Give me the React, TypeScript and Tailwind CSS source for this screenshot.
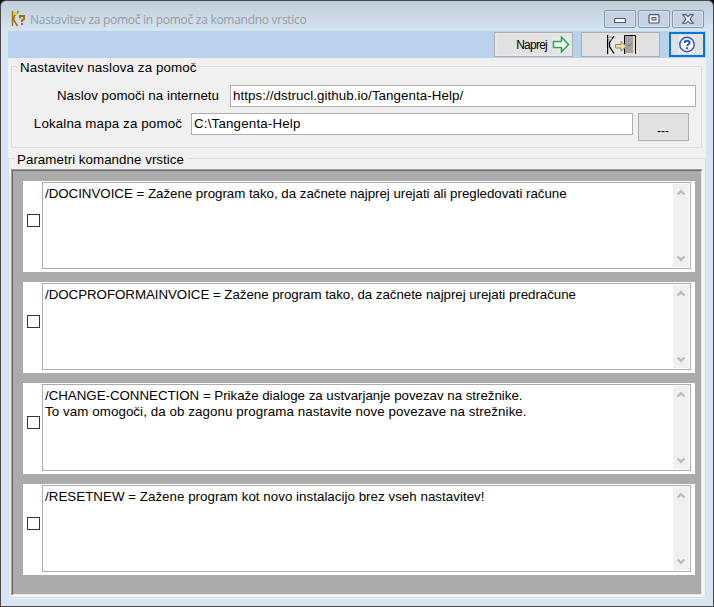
import React from "react";

type Param = { lines: { text: string; cls: string }[] };

const params: Param[] = [
  { lines: [{ text: "/DOCINVOICE = Zažene program tako, da začnete najprej urejati ali pregledovati račune", cls: "tracking-[-0.03px]" }] },
  { lines: [{ text: "/DOCPROFORMAINVOICE = Zažene program tako, da začnete najprej urejati predračune", cls: "tracking-[-0.045px]" }] },
  {
    lines: [
      { text: "/CHANGE-CONNECTION = Prikaže dialoge za ustvarjanje povezav na strežnike.", cls: "tracking-[-0.03px]" },
      { text: "To vam omogoči, da ob zagonu programa nastavite nove povezave na strežnike.", cls: "tracking-[0.08px]" },
    ],
  },
  { lines: [{ text: "/RESETNEW = Zažene program kot novo instalacijo brez vseh nastavitev!", cls: "tracking-[0.03px]" }] },
];

function AppIcon() {
  return (
    <svg width="16" height="17" viewBox="0 0 16 17" fill="none">
      <path d="M1.500 1v15M7.500 1L3 6.500v4L6.500 16" stroke="#a86a08" strokeWidth="1.400" />
      <rect x="3" y="2" width="3" height="3" fill="#b8e04a" />
      <path d="M9 8.500V6h4v3l-2 1.500V12M11 13v2" stroke="#a86a08" strokeWidth="2" />
    </svg>
  );
}

function CaptionButton({ children }: { children: React.ReactNode }) {
  return (
    <div className="flex h-[18px] w-8 items-center justify-center rounded-[2px] border border-[#8896a8] bg-[#c3d3e4] shadow-[inset_0_0_0_1px_#d5e1ed]">
      {children}
    </div>
  );
}

function TitleBar() {
  return (
    <div className="flex h-[30px] items-start pl-2.5 pr-[9px]">
      <div className="mt-[9px]"><AppIcon /></div>
      <div className="ml-[3px] mt-[10px] whitespace-nowrap font-['Open_Sans',sans-serif] text-[12px] leading-[18px] tracking-[-0.28px] text-[#969ba1]">
        Nastavitev za pomoč in pomoč za komandno vrstico
      </div>
      <div className="ml-auto mt-[9px] flex gap-0.5">
        <CaptionButton>
          <svg width="12" height="6" viewBox="0 0 12 6" className="mt-1">
            <rect x="0.500" y="0.500" width="11" height="4" rx="1" fill="#f4f6f8" stroke="#535666" strokeWidth="1.200" />
          </svg>
        </CaptionButton>
        <CaptionButton>
          <svg width="12" height="10" viewBox="0 0 12 10">
            <rect x="1" y="0.700" width="10" height="8.300" rx="1" fill="#f4f6f8" stroke="#535666" strokeWidth="1.200" />
            <rect x="4" y="3.500" width="4" height="2.500" fill="#c3d3e4" stroke="#535666" />
          </svg>
        </CaptionButton>
        <CaptionButton>
          <svg width="12" height="10" viewBox="0 0 12 10">
            <path d="M.7.600h3.300l2 2 2-2h3.300L8 4.900l3.300 4.400H8L6 7.200 4 9.300H.700L4 4.900z" fill="#f4f6f8" stroke="#535666" strokeWidth="1.100" />
          </svg>
        </CaptionButton>
      </div>
    </div>
  );
}

function ExitIcon() {
  return (
    <svg width="29" height="19" viewBox="0 0 29 19" fill="none">
      <rect width="29" height="19" fill="#e6e6e6" />
      <rect x="18" y="1" width="8" height="18" fill="#a3a3a3" />
      <path d="M26 1h2v18h-9v-1h7z" fill="#f0dfa8" />
      <path d="M17.500 19V.5H28.500V19" stroke="#000" />
      <path d="M.5 0v19" stroke="#000" strokeWidth="1.400" />
      <path d="M7 1L2.500 7.500v4L7 18.500" stroke="#000" strokeWidth="1.300" />
      <circle cx="3" cy="3.500" r="1.700" fill="#f4f4f4" stroke="#888" />
      <path d="M8.500 9.500h5.500v-3l5.500 5-5.500 4.500v-3H8.500z" fill="#f0dfa8" stroke="#8a8674" />
      <path d="M20.500 10.500h2l2-2" stroke="#666" />
    </svg>
  );
}

function Toolbar() {
  return (
    <div className="flex h-[27px] items-start bg-[#b9d1ea] pl-[486px] pt-px">
      <div className="flex h-[25px] w-[79px] items-center justify-end border border-[#adadad] bg-[#e1e1e1] pr-0.5 shadow-[inset_0_0_0_2px_#e6e6e6]">
        <span className="text-[12px] leading-4 tracking-[-0.75px]">Naprej</span>
        <svg width="18" height="17" viewBox="0 0 18 17" className="ml-[5px] bg-[#e8e8e8]">
          <path d="M1.500 5.500h8V1.200l7 7.300-7 7.300v-4.300h-8z" fill="#fff" stroke="#22ac4c" strokeWidth="1.600" />
        </svg>
      </div>
      <div className="ml-2 flex h-[25px] w-[79px] items-center justify-center border border-[#adadad] bg-[#e1e1e1] pl-0.5">
        <ExitIcon />
      </div>
      <div className="ml-[9px] flex h-[25px] w-9 items-center justify-center border-2 border-[#0078d7] bg-[#e1e1e1]">
        <svg width="16" height="17" viewBox="0 0 16 17" className="bg-[#f0f0f0]">
          <circle cx="8" cy="8.500" r="7.200" fill="#fff" stroke="#1f50e0" strokeWidth="1.400" />
          <path d="M5.700 6.900C5.700 3.900 10.500 4 10.500 6.700c0 1.800-2.400 1.700-2.400 3.400M8.100 11.200v2" fill="none" stroke="#1f50e0" strokeWidth="2" />
        </svg>
      </div>
    </div>
  );
}

function Chevron({ up }: { up?: boolean }) {
  return (
    <svg width="8" height="7" viewBox="0 0 8 7" fill="none">
      <path d={up ? "M.6 5.500L4 2.100 7.400 5.500" : "M.6 1.500L4 4.900 7.400 1.500"} stroke="#bcbcbc" strokeWidth="2.400" />
    </svg>
  );
}

function ParamRow({ lines }: Param) {
  return (
    <div className="flex h-[91px] w-[672px] bg-white pl-1 pt-px">
      <div className="mt-8 size-[13px] border border-[#333] bg-white" />
      <div className="ml-0.5 flex h-[87px] w-[649px] border border-[#abadb3] bg-white p-px">
        <div className="flex-1 pl-px pt-[2px]">
          {lines.map((l) => (
            <div key={l.text} className={"h-4 whitespace-nowrap leading-4 " + l.cls}>{l.text}</div>
          ))}
        </div>
        <div className="flex w-4 flex-col items-center justify-between bg-[#f0f0f0] pb-[5px] pt-[5px]">
          <Chevron up />
          <Chevron />
        </div>
      </div>
    </div>
  );
}

export default function App() {
  return (
    <div className="h-[607px] w-[714px] overflow-hidden bg-black font-['Liberation_Sans',Arial,sans-serif] text-[13.333px] text-black">
      <div className="h-full rounded-t-[6px] border border-[#4b484c] bg-[#d7e4f2] bg-linear-to-b from-[#bfcddb] to-[#d7e4f2] to-[30px]">
        <TitleBar />
        <div className="mx-[7px] h-[568px] bg-[#f0f0f0]">
          <Toolbar />
          <fieldset className="ml-[3px] mt-[2px] h-[88px] w-[691px] border border-[#dcdcdc]">
            <legend className="ml-[6px] h-[13px] w-[181px] whitespace-nowrap pl-0.5 leading-4 tracking-[0.12px]">Nastavitev naslova za pomoč</legend>
            <div className="mt-3 flex h-[22px] items-center">
              <label className="w-[207px] whitespace-nowrap text-right tracking-[0.02px]">Naslov pomoči na internetu</label>
              <div className="ml-[11px] flex h-[22px] w-[466px] items-center whitespace-nowrap border border-[#abadb3] bg-white pl-0.5 tracking-[0.07px]">
                https://dstrucl.github.io/Tangenta-Help/
              </div>
            </div>
            <div className="mt-1.5 flex h-7 items-start">
              <label className="w-[170px] whitespace-nowrap text-right leading-[21px] tracking-[0.14px]">Lokalna mapa za pomoč</label>
              <div className="ml-[9px] flex h-[22px] w-[442px] items-center whitespace-nowrap border border-[#abadb3] bg-white pl-0.5 tracking-[0.18px]">
                C:\Tangenta-Help
              </div>
              <div className="ml-[5px] flex h-7 w-[51px] items-center justify-center border border-[#adadad] bg-[#e1e1e1] pr-px pt-[7px] text-[12px]">---</div>
            </div>
          </fieldset>
          <fieldset className="mt-1 h-[446px] w-[698px] border border-[#dcdcdc]">
            <legend className="ml-[6px] h-[13px] w-[173px] whitespace-nowrap pl-0.5 leading-4 tracking-[0.04px]">Parametri komandne vrstice</legend>
            <div className="ml-0.5 mt-1 h-[427px] w-[692px] border border-b-white border-l-[#a0a0a0] border-r-white border-t-[#a0a0a0]">
              <div className="flex h-full flex-col gap-2.5 border border-b-[#e3e3e3] border-l-[#696969] border-r-[#e3e3e3] border-t-[#696969] bg-[#ababab] pl-2.5 pt-2.5">
                {params.map((p) => (
                  <ParamRow key={p.lines[0].text} lines={p.lines} />
                ))}
              </div>
            </div>
          </fieldset>
        </div>
      </div>
    </div>
  );
}
